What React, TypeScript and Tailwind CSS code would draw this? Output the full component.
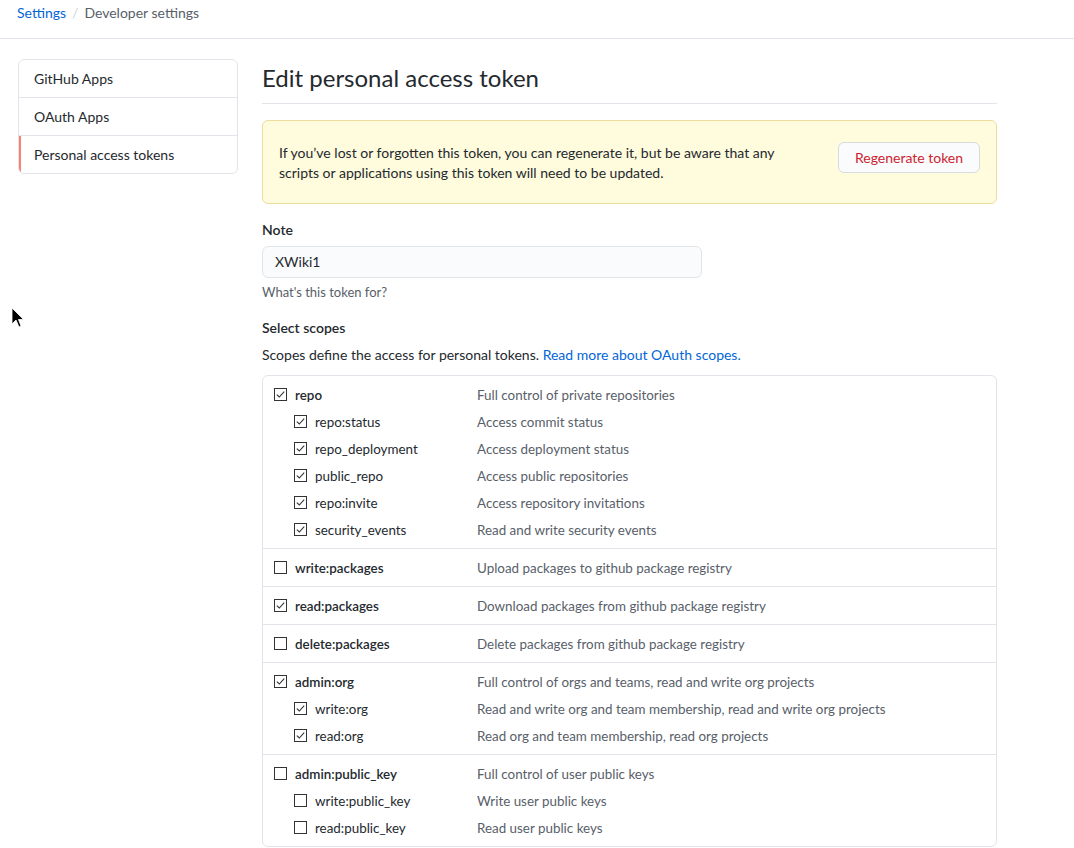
import React from "react";

type Scope = { name: string; desc: string; checked: boolean; sub?: boolean };

const groups: Scope[][] = [
  [
    { name: "repo", desc: "Full control of private repositories", checked: true },
    { name: "repo:status", desc: "Access commit status", checked: true, sub: true },
    { name: "repo_deployment", desc: "Access deployment status", checked: true, sub: true },
    { name: "public_repo", desc: "Access public repositories", checked: true, sub: true },
    { name: "repo:invite", desc: "Access repository invitations", checked: true, sub: true },
    { name: "security_events", desc: "Read and write security events", checked: true, sub: true },
  ],
  [{ name: "write:packages", desc: "Upload packages to github package registry", checked: false }],
  [{ name: "read:packages", desc: "Download packages from github package registry", checked: true }],
  [{ name: "delete:packages", desc: "Delete packages from github package registry", checked: false }],
  [
    { name: "admin:org", desc: "Full control of orgs and teams, read and write org projects", checked: true },
    { name: "write:org", desc: "Read and write org and team membership, read and write org projects", checked: true, sub: true },
    { name: "read:org", desc: "Read org and team membership, read org projects", checked: true, sub: true },
  ],
  [
    { name: "admin:public_key", desc: "Full control of user public keys", checked: false },
    { name: "write:public_key", desc: "Write user public keys", checked: false, sub: true },
    { name: "read:public_key", desc: "Read user public keys", checked: false, sub: true },
  ],
];

function Check({ checked }: { checked: boolean }) {
  return (
    <span className="w-[13px] h-[13px] shrink-0 border border-[#333333] bg-white flex items-center justify-center">
      {checked && (
        <svg width="11" height="11" viewBox="0 0 11 11">
          <path d="M1.8 5.6 L4.3 8 L9.2 2.6" stroke="#333333" strokeWidth="1.1" fill="none" />
        </svg>
      )}
    </span>
  );
}

function Row({ s }: { s: Scope }) {
  return (
    <div className="flex items-center h-[27px]">
      <div className={`w-[203px] shrink-0 flex items-center gap-[8px] ${s.sub ? "pl-[20px]" : ""}`}>
        <Check checked={s.checked} />
        <span className={s.sub ? "text-[#24292e]" : "text-[#24292e] font-semibold"}>{s.name}</span>
      </div>
      <div className="text-[#586069]">{s.desc}</div>
    </div>
  );
}

export default function App() {
  return (
    <div
      className="relative h-[848px] bg-white text-[14px] leading-[20px] text-[#24292e] overflow-hidden"
      style={{ fontFamily: "Lato, 'Noto Sans', sans-serif" }}
    >
      <div className="h-[39px] border-b border-[#e1e4e8] pl-[17px] pt-[3px] flex items-start gap-[6px]">
        <a className="text-[#0366d6]">Settings</a>
        <span className="text-[#d1d5da]">/</span>
        <span className="text-[#586069]">Developer settings</span>
      </div>

      <div className="flex pt-[20px] pl-[18px]">
        <nav className="w-[220px] shrink-0 self-start border border-[#e1e4e8] rounded-md overflow-hidden">
          <div className="h-[38px] flex items-center pl-[15px] border-b border-[#e1e4e8]">GitHub Apps</div>
          <div className="h-[38px] flex items-center pl-[15px] border-b border-[#e1e4e8]">OAuth Apps</div>
          <div className="h-[37px] flex items-center pl-[13px] border-l-2 border-[#f9826c]">Personal access tokens</div>
        </nav>

        <main className="ml-[24px] w-[735px]">
          <h1 className="pt-[4px] pb-[10px] leading-[30px] text-[24px] font-normal border-b border-[#e1e4e8]">
            Edit personal access token
          </h1>

          <div className="mt-[16px] h-[84px] bg-[#fffbdd] border border-[#eedc9f] rounded-md flex items-start pt-[21px] pl-[16px] pr-[16px]">
            <p className="flex-1 mt-[1px]">
              If you’ve lost or forgotten this token, you can regenerate it, but be aware that any
              <br />
              scripts or applications using this token will need to be updated.
            </p>
            <button className="h-[31px] w-[142px] bg-[#fafbfc] border border-[#d8dade] rounded-md text-[#cb2431]">
              Regenerate token
            </button>
          </div>

          <div className="mt-[16px] font-semibold">Note</div>
          <div className="mt-[6px] w-[440px] h-[32px] bg-[#fafbfc] border border-[#e1e4e8] rounded-md flex items-center px-[12px]">
            XWiki1
          </div>
          <div className="mt-[5px] text-[13px] leading-[18px] text-[#586069]">What's this token for?</div>

          <div className="mt-[17px] font-semibold">Select scopes</div>
          <div className="mt-[7px]">
            Scopes define the access for personal tokens.{" "}
            <a className="text-[#0366d6]">Read more about OAuth scopes.</a>
          </div>

          <div className="mt-[10px] border border-[#e1e4e8] rounded-md text-[13.4px]">
            {groups.map((g, i) => (
              <div key={i} className={`pl-[11px] pt-[5px] pb-[5px] ${i < groups.length - 1 ? "border-b border-[#e1e4e8]" : ""}`}>
                {g.map((s) => (
                  <Row key={s.name} s={s} />
                ))}
              </div>
            ))}
          </div>
        </main>
      </div>

      <svg className="absolute left-[11px] top-[307px]" width="14" height="24" viewBox="0 0 14 24">
        <path d="M1 1 L1 17 L5 13 L8 20 L10 19 L7.5 12.5 L12.5 12.5 Z" fill="#000" stroke="#fff" strokeWidth="0.8" />
      </svg>
    </div>
  );
}
